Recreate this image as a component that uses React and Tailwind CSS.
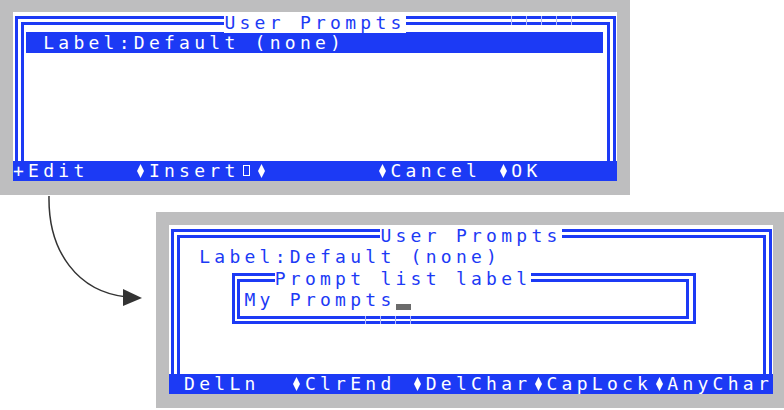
import React from 'react';

// terminal cell = 15.1px wide (DejaVu Sans Mono 18px advance 10.837 + 4.263 tracking)

const Diamond = () => (
  <svg width="7" height="14" viewBox="0 0 7 14" className="inline-block ml-[3.6px] mr-[4.5px] align-[-1px]">
    <path d="M3.5 0 L7 7 L3.5 14 L0 7 Z" fill="white" />
  </svg>
);

const MissingGlyph = () => (
  <span className="inline-block w-[7px] h-[11px] border-[1.5px] border-white ml-[3.5px] mr-[4.6px] align-[1px]" />
);

const Row = ({ children }) => (
  <div className="h-[21.3px] whitespace-pre">{children}</div>
);

const TitleRow = ({ children }) => (
  <div className="h-[21.3px] leading-[21px] whitespace-pre">{children}</div>
);

const Title = ({ children }) => <span className="inline-block bg-white">{children}</span>;

// light seams between the "═" cells of a scroll marker
const seams =
  'absolute bg-[repeating-linear-gradient(90deg,#b4bdfa_0_1px,transparent_1px_15.1px)]';

// double-line box frame; children are laid out on the terminal grid again
const Frame = ({ children }) => (
  <div className="h-full pt-[4px] pl-[2px] pr-[1px] flex flex-col">
    <div className="flex-1 flex flex-col border-[3px] border-b-0 border-[#1c3af5] pt-[3px] px-[3px]">
      <div className="flex-1 border-[3px] border-b-0 border-[#1c3af5]">
        <div className="-ml-[11px] -mt-[13px] -mr-[10px]">{children}</div>
      </div>
    </div>
  </div>
);

const Terminal = ({ children, bar }) => (
  <div className="w-[604px] h-[169px] overflow-hidden bg-white flex flex-col font-['DejaVu_Sans_Mono',monospace] text-[18px] leading-[21.3px] tracking-[4.263px] text-[#1c3af5]">
    <div className="relative h-[149.1px] shrink-0">{children}</div>
    <div className="flex-1 bg-[#1c3af5] text-white whitespace-pre leading-[20px]">{bar}</div>
  </div>
);

const TopWindow = () => (
  <div className="w-[630px] h-[195px] bg-[#bebebf] pl-[13px] pt-[12px] shrink-0">
    <Terminal
      bar={
        <>
          {'+Edit   '}<Diamond />Insert<MissingGlyph /><Diamond />{'       '}<Diamond />{'Cancel '}<Diamond />OK
        </>
      }
    >
      <Frame>
        <TitleRow>{'              '}<Title>User Prompts</Title></TitleRow>
        <Row>
          <div className="ml-[13px] w-[577px] h-[21px] -mt-[1px] bg-[#1c3af5] text-white pl-[17.2px] leading-[21px]">
            Label:Default (none)
          </div>
        </Row>
      </Frame>
      <div className={seams + ' left-[498px] top-[4px] w-[62px] h-[9px]'} />
    </Terminal>
  </div>
);

const PromptBox = () => (
  <div className="mt-[5.4px] ml-[63px] w-[464px] h-[51px] border-[3px] border-[#1c3af5] pt-[3px] pl-[2px]">
    <div className="w-[452px] h-[40px] border-[3px] border-[#1c3af5]">
      <div className="-mt-[14.4px]">
        <div className="h-[21.3px] pl-[34.7px] whitespace-pre">
          <Title>Prompt list label</Title>
        </div>
        <div className="h-[21.3px] pl-[4.5px] whitespace-pre">
          My Prompts
          <span className="inline-block w-[15px] h-[6px] bg-[#6b6b6b] align-[-4px]" />
        </div>
      </div>
    </div>
  </div>
);

const BottomWindow = () => (
  <div className="ml-[156px] w-[630px] h-[196px] bg-[#bebebf] pl-[13px] pt-[13px] shrink-0">
    <Terminal
      bar={
        <>
          {' DelLn  '}<Diamond />{'ClrEnd '}<Diamond />DelChar<Diamond />CapLock<Diamond />AnyChar
        </>
      }
    >
      <Frame>
        <TitleRow>{'              '}<Title>User Prompts</Title></TitleRow>
        <Row>{'  Label:Default (none)'}</Row>
        <PromptBox />
      </Frame>
      <div className={seams + ' left-[196px] top-[91px] w-[47px] h-[8px]'} />
    </Terminal>
  </div>
);

export default function App() {
  return (
    <div className="relative w-[784px] h-[410px] bg-white overflow-hidden flex flex-col gap-[17px]">
      <TopWindow />
      <BottomWindow />
      <svg className="absolute inset-0 pointer-events-none" width="784" height="410" viewBox="0 0 784 410">
        <path d="M49 196 C 48 252, 78 292, 127 297" fill="none" stroke="#333" strokeWidth="1.5" />
        <polygon points="123,289 142,298 123,306" fill="#333" />
      </svg>
    </div>
  );
}
